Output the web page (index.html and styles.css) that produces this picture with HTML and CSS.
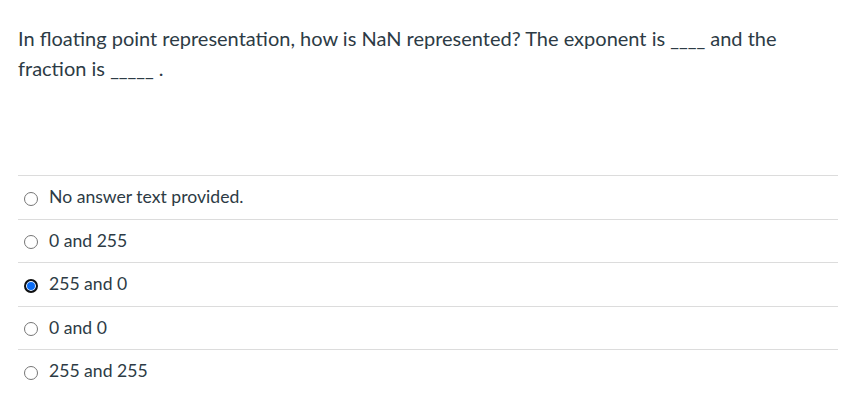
FILE: index.html
```html
<!DOCTYPE html>
<html>
<head>
<meta charset="utf-8">
<link rel="stylesheet" href="styles.css">
</head>
<body>
<div class="quiz">
  <div class="question">In floating point representation, how is NaN represented? The exponent is <span class="blank">____</span> and the fraction is <span class="blank">_____</span> .</div>
  <div class="answers">
    <label class="answer"><span class="radio"></span><span class="text">No answer text provided.</span></label>
    <label class="answer"><span class="radio"></span><span class="text">0 and 255</span></label>
    <label class="answer"><span class="radio checked"></span><span class="text">255 and 0</span></label>
    <label class="answer"><span class="radio"></span><span class="text">0 and 0</span></label>
    <label class="answer"><span class="radio"></span><span class="text">255 and 255</span></label>
  </div>
</div>
</body>
</html>
```

FILE: styles.css
```css
html, body {
  margin: 0;
  padding: 0;
  background: #fff;
}
.quiz {
  padding: 23px 7px 0 18px;
  font-family: Lato, "Open Sans", sans-serif;
  color: #2d3b45;
}
.question {
  font-size: 20px;
  line-height: 30px;
  max-width: 790px;
}
.blank {
  font-size: 19px;
  line-height: 1;
}
.answers {
  margin-top: 92px;
}
.answer {
  display: flex;
  align-items: center;
  height: 42.5px;
  border-top: 1px solid #dcdcdc;
  font-size: 17.6px;
}
.radio {
  box-sizing: border-box;
  width: 14px;
  height: 14px;
  margin: 3px 11px 0 6px;
  border: 1px solid #767676;
  border-radius: 50%;
  background: #fff;
}
.radio.checked {
  border: 2px solid #101010;
  background: #0a6cf5;
  box-shadow: inset 0 0 0 1px #fff;
}
.text {
  line-height: 20px;
}
```
